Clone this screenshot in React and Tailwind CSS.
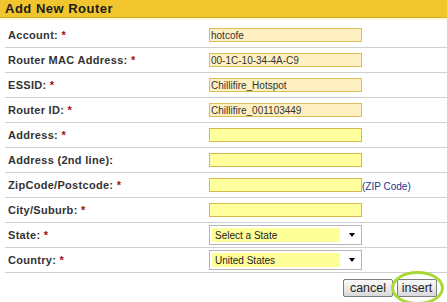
import { useState } from 'react';

const rows = [
  { label: 'Account:', req: true, value: 'hotcofe' },
  { label: 'Router MAC Address:', req: true, value: '00-1C-10-34-4A-C9' },
  { label: 'ESSID:', req: true, value: 'Chillifire_Hotspot' },
  { label: 'Router ID:', req: true, value: 'Chillifire_001103449' },
  { label: 'Address:', req: true, value: '' },
  { label: 'Address (2nd line):', req: false, value: '' },
  { label: 'ZipCode/Postcode:', req: true, value: '', hint: '(ZIP Code)' },
  { label: 'City/Suburb:', req: true, value: '' },
  { label: 'State:', req: true, select: 'Select a State' },
  { label: 'Country:', req: true, select: 'United States' },
];

function Field({ row }) {
  if (row.select) {
    return (
      <div className="flex h-[20px] w-[153px] items-center border border-[#b5b5b5] bg-white pl-[2px] pr-[6px]">
        <span className="flex h-[14px] w-[128px] items-center bg-[#ffff99] pl-[3px] text-[10px] text-[#222]">{row.select}</span>
        <span className="ml-auto h-0 w-0 border-x-[3.5px] border-t-[4px] border-x-transparent border-t-black" />
      </div>
    );
  }
  const filled = row.value !== '';
  return (
    <div className="flex items-end">
      <div
        className={`flex h-[14px] w-[153px] items-center border pl-[1px] text-[10px] text-[#333] ${
          filled ? 'border-[#d9be5a] bg-[#fff0c2]' : 'border-[#d5b94e] bg-[#ffff9e]'
        }`}
      >
        {row.value}
      </div>
      {row.hint && <span className="mb-[-2px] text-[10px] text-[#1c3489]">{row.hint}</span>}
    </div>
  );
}

export default function App() {
  const [rowsState] = useState(rows);
  return (
    <div className="relative h-[302px] w-[447px] overflow-hidden bg-white font-['Liberation_Sans',Arial,sans-serif]">
      <div className="flex h-[18px] items-center border-b border-[#d9ab24] bg-[#f0c52e] pl-[5px]">
        <h1 className="text-[13px] font-bold tracking-[0.5px] text-[#1c1c1c]">Add New Router</h1>
      </div>
      <div className="h-[2px] bg-[#fffbe2]" />

      <div className="ml-[5px] mt-[3px]">
        {rowsState.map((r) => (
          <div key={r.label} className="grid h-[25px] grid-cols-[201px_1fr] items-center border-b border-[#cfcfcf] pl-[3px]">
            <span className="text-[11px] font-bold tracking-[0.3px] text-[#333]">
              {r.label} {r.req && <span className="text-[#a30d0d]">*</span>}
            </span>
            <Field row={r} />
          </div>
        ))}
      </div>

      <div className="mt-[6px] flex justify-end gap-[4px] pr-[10px]">
        <button className="h-[18px] w-[50px] rounded-[2px] border border-[#7d7d7d] bg-gradient-to-b from-[#fafafa] to-[#d9d9d9] text-[12.5px] leading-none text-[#222]">
          cancel
        </button>
        <button className="h-[18px] w-[40px] rounded-[2px] border border-[#7d7d7d] bg-gradient-to-b from-[#fafafa] to-[#d9d9d9] text-[12.5px] leading-none text-[#222]">
          insert
        </button>
      </div>
      <span className="absolute left-[391px] top-[271px] h-[34px] w-[53px] rounded-[50%] border-[3px] border-[#a9d934]" />
    </div>
  );
}
